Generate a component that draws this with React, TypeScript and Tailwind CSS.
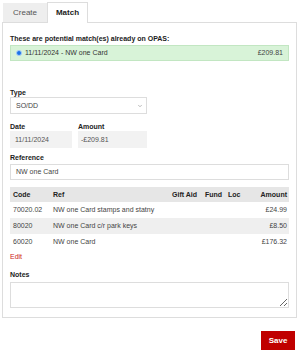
import React from 'react';
import { ChevronDown } from 'lucide-react';

const rows = [
  { code: '70020.02', ref: 'NW one Card stamps and statny', amount: '£24.99', shaded: false },
  { code: '80020', ref: 'NW one Card c/r park keys', amount: '£8.50', shaded: true },
  { code: '60020', ref: 'NW one Card', amount: '£176.32', shaded: false },
];

const App: React.FC = () => {
  return (
    <div className="w-[300px] h-[351px] bg-white text-[7px] leading-[8px] text-[#333] font-['Liberation_Sans',Arial,sans-serif]">
      {/* Tabs */}
      <div className="flex items-end pl-[3px] pt-[2px] h-[22px]">
        <div className="w-[44px] h-[19px] bg-[#eeeeee] flex items-center justify-center text-[8px] text-[#555]">
          Create
        </div>
        <div className="relative z-10 w-[41px] h-[21px] bg-white border border-b-0 border-[#dddddd] flex items-center justify-center text-[8px] font-bold text-[#222] -mb-px">
          Match
        </div>
      </div>

      {/* Panel */}
      <div className="ml-[2px] w-[295px] border border-[#dddddd] px-[7px] pt-[12px] pb-[9px]">
        <p className="font-bold text-[#222]">These are potential match(es) already on OPAS:</p>

        <div className="mt-[2px] h-[16px] flex items-center justify-between bg-[#d8f3d8] border border-[#c2e6c2] px-[5px]">
          <div className="flex items-center gap-[3px]">
            <span className="w-[6px] h-[6px] rounded-full bg-[#1a73e8] border border-[#a9cdf7]" />
            <span className="text-[#333]">11/11/2024 - NW one Card</span>
          </div>
          <span className="text-[#444]">£209.81</span>
        </div>

        {/* Type */}
        <p className="mt-[28px] font-bold text-[#222]">Type</p>
        <div className="w-[137px] h-[17px] border border-[#dddddd] flex items-center justify-between pl-[5px] pr-[3px] text-[#444]">
          <span>SO/DD</span>
          <ChevronDown size={6} strokeWidth={2} className="text-[#777]" />
        </div>

        {/* Date / Amount */}
        <div className="mt-[9px] flex gap-[6px]">
          <div>
            <p className="font-bold text-[#222]">Date</p>
            <div className="w-[62px] h-[17px] bg-[#f2f2f2] flex items-center pl-[5px] text-[#555]">11/11/2024</div>
          </div>
          <div>
            <p className="font-bold text-[#222]">Amount</p>
            <div className="w-[69px] h-[17px] bg-[#f2f2f2] flex items-center pl-[3px] text-[#555]">-£209.81</div>
          </div>
        </div>

        {/* Reference */}
        <p className="mt-[6px] font-bold text-[#222]">Reference</p>
        <div className="mt-[2px] h-[16px] border border-[#dddddd] flex items-center pl-[5px] text-[#444]">
          NW one Card
        </div>

        {/* Lines */}
        <table className="mt-[7px] w-full border-collapse">
          <thead>
            <tr className="bg-[#e6e6e6] h-[15px] font-bold text-[#222]">
              <th className="text-left pl-[3px] w-[43px]">Code</th>
              <th className="text-left">Ref</th>
              <th className="text-left w-[33px]">Gift Aid</th>
              <th className="text-left w-[23px]">Fund</th>
              <th className="text-left w-[18px]">Loc</th>
              <th className="text-right pr-[2px] w-[43px]">Amount</th>
            </tr>
          </thead>
          <tbody>
            {rows.map((r) => (
              <tr key={r.code} className={`h-[16px] text-[#444] ${r.shaded ? 'bg-[#efefef]' : ''}`}>
                <td className="pl-[3px]">{r.code}</td>
                <td className="whitespace-nowrap">{r.ref}</td>
                <td />
                <td />
                <td />
                <td className="text-right pr-[2px]">{r.amount}</td>
              </tr>
            ))}
          </tbody>
        </table>

        <p className="mt-[3px] text-[#cc2222]">Edit</p>

        {/* Notes */}
        <p className="mt-[10px] font-bold text-[#222]">Notes</p>
        <textarea className="mt-[3px] block w-full h-[26px] border border-[#dddddd] outline-none" />
      </div>

      <div className="mt-[13px] flex justify-end pr-[5px]">
        <button className="w-[34px] h-[19px] bg-[#c00000] text-white font-bold text-[8px]">Save</button>
      </div>
    </div>
  );
};

export default App;
